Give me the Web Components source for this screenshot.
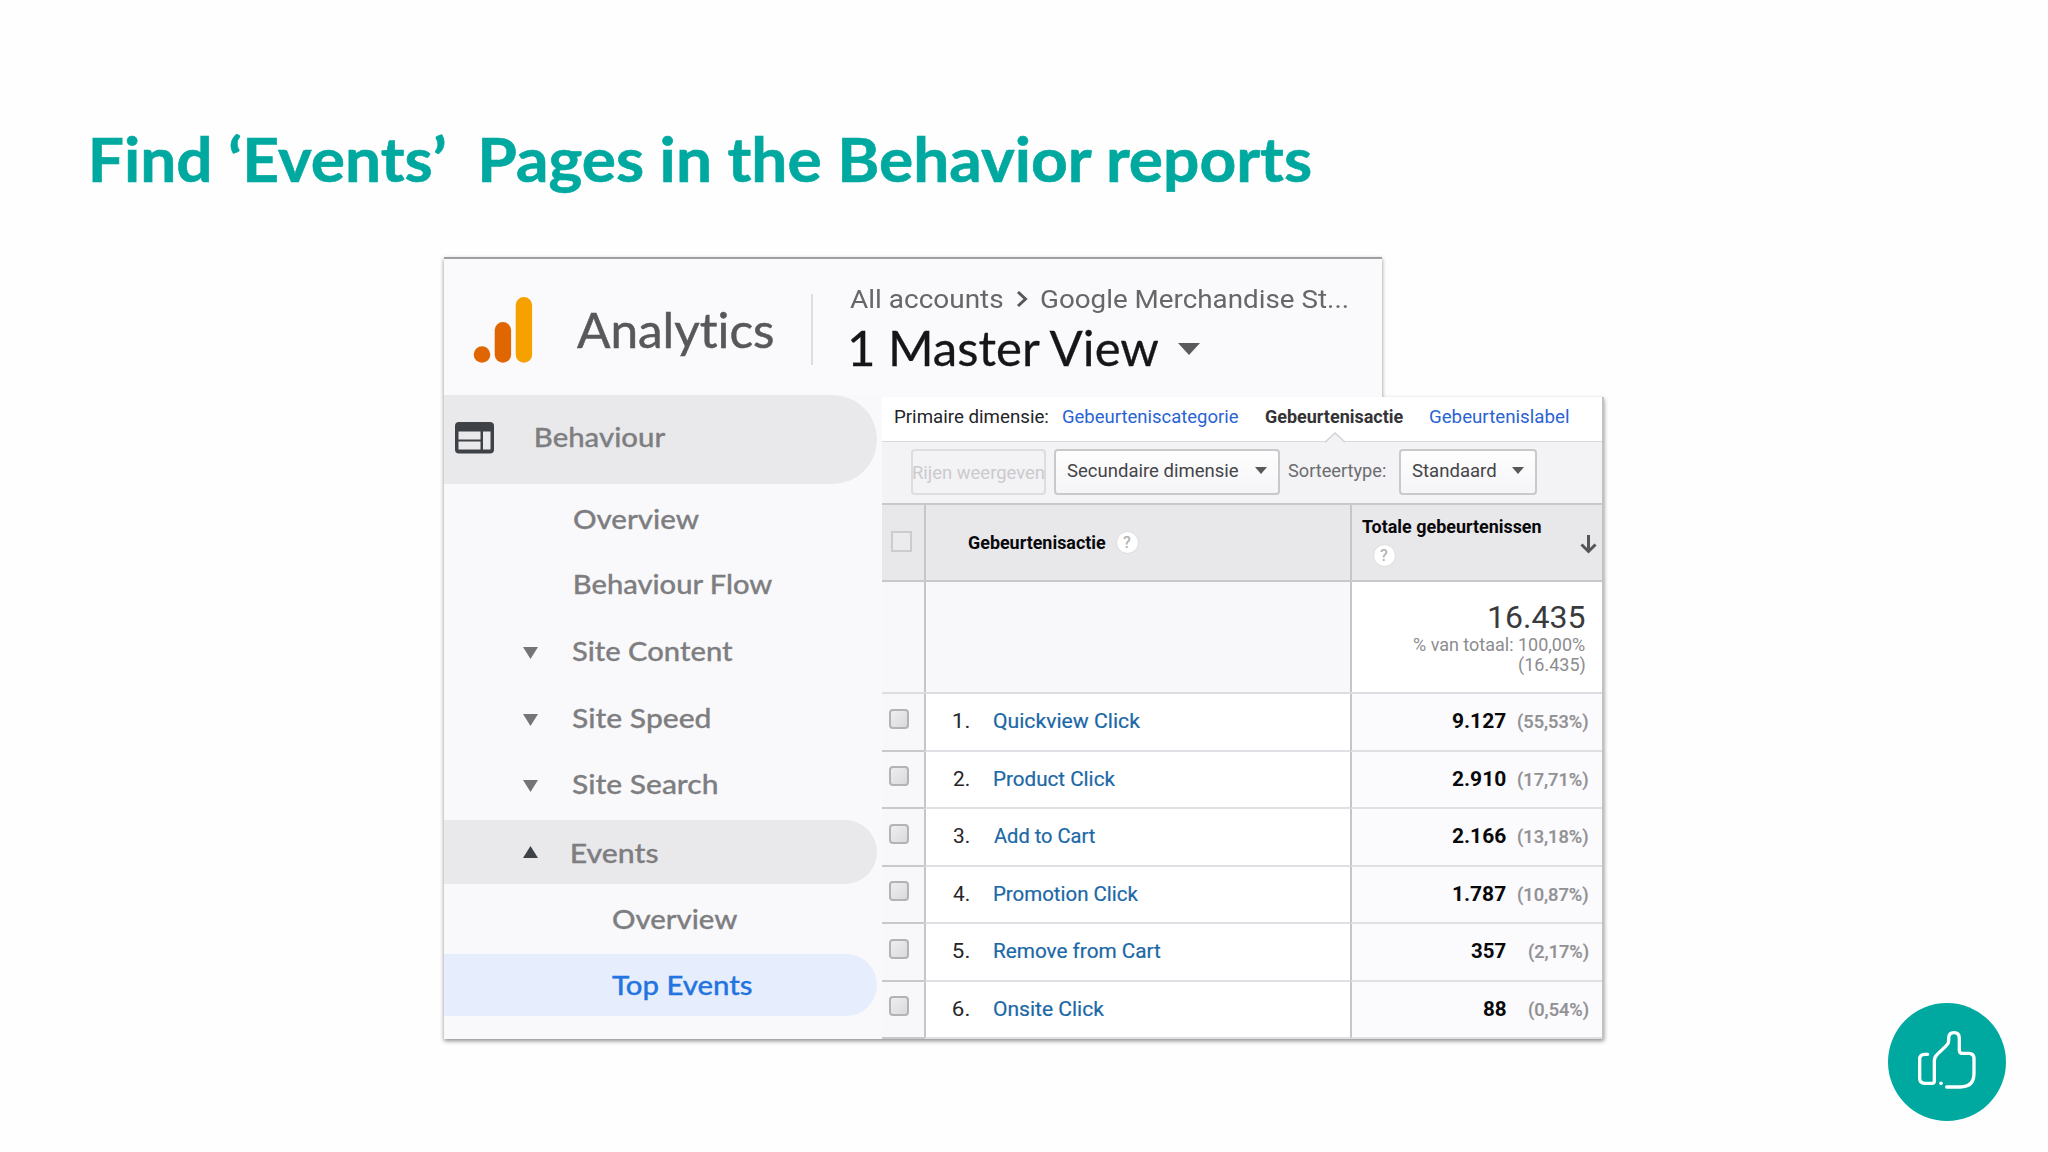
<!DOCTYPE html>
<html lang="en">
<head>
<meta charset="utf-8">
<title>Find Events Pages in the Behavior reports</title>
<style>
  body {
    margin: 0;
    background: #fefefe;
    font-family: Roboto, "Liberation Sans", sans-serif;
    font-variant-ligatures: none;
  }
</style>
</head>
<body>
<slide-page>
  <fit-text slot="title" w="1220">Find ‘Events’  Pages in the Behavior reports</fit-text>
  <analytics-window slot="figure">
    <analytics-header slot="header"></analytics-header>
    <side-nav slot="nav">
      <nav-item class="section" style="--h: 89px" icon="web" w="129.5">Behaviour</nav-item>
      <nav-item style="--h: 71px; --indent: 129.5px" w="125">Overview</nav-item>
      <nav-item style="--h: 60px; --indent: 130.5px" w="198">Behaviour Flow</nav-item>
      <nav-item style="--h: 73px" icon="down" w="161">Site Content</nav-item>
      <nav-item style="--h: 61px" icon="down" w="138.5">Site Speed</nav-item>
      <nav-item style="--h: 71px" icon="down" w="145.5">Site Search</nav-item>
      <nav-item class="open" style="--h: 64px" icon="up" w="86">Events</nav-item>
      <nav-item style="--h: 70px; --indent: 168.5px; --nudge: 0px" w="124.5">Overview</nav-item>
      <nav-item class="active" style="--h: 62px; --indent: 168px; --nudge: 0px" w="140">Top Events</nav-item>
    </side-nav>
    <event-report slot="report">
      <event-row n="1." name="Quickview Click" name-w="146" value="9.127" value-w="54" share="(55,53%)" share-w="70.5"></event-row>
      <event-row n="2." name="Product Click" name-w="121" value="2.910" value-w="54" share="(17,71%)" share-w="70.5"></event-row>
      <event-row n="3." name="Add to Cart" name-w="101" value="2.166" value-w="54" share="(13,18%)" share-w="70.5"></event-row>
      <event-row n="4." name="Promotion Click" name-w="144" value="1.787" value-w="53" share="(10,87%)" share-w="70.5"></event-row>
      <event-row n="5." name="Remove from Cart" name-w="166.5" value="357" value-w="35" share="(2,17%)" share-w="60"></event-row>
      <event-row n="6." name="Onsite Click" name-w="110" value="88" value-w="23.5" share="(0,54%)" share-w="60"></event-row>
    </event-report>
  </analytics-window>
  <like-button slot="action"></like-button>
</slide-page>

<script>
const canvasContext = document.createElement('canvas').getContext('2d')

class BaseElement extends HTMLElement {
  connectedCallback() {
    if (this.shadowRoot) return
    const template = document.createElement('template')
    template.innerHTML = this.template().trim()
    const shadow = this.attachShadow({mode: 'open'})
    shadow.append(template.content.cloneNode(true))
  }
}

// One line of text, stretched so that its ink is exactly `w` pixels wide
class FitText extends BaseElement {
  template() {
    return `
      <style>
        :host {
          display: block;
          flex: none;
        }
        span {
          display: block;
          width: max-content;
          white-space: pre;
          transform-origin: 0 50%;
        }
      </style>
      <span><slot></slot></span>
    `
  }

  connectedCallback() {
    super.connectedCallback()
    const width = Number(this.getAttribute('w'))
    const style = getComputedStyle(this)
    canvasContext.font = `${style.fontWeight} ${style.fontSize} ${style.fontFamily}`
    const metrics = canvasContext.measureText(this.textContent)
    const ink = metrics.actualBoundingBoxLeft + metrics.actualBoundingBoxRight
    const scale = width / ink
    this.style.width = `${width}px`
    this.shadowRoot.querySelector('span').style.transform =
      `translateX(${metrics.actualBoundingBoxLeft * scale}px) scaleX(${scale})`
  }
}

class SlidePage extends BaseElement {
  template() {
    return `
      <style>
        :host {
          display: flex;
          flex-direction: column;
          width: 2048px;
          height: 1152px;
          overflow: hidden;
        }
        h1 {
          box-sizing: border-box;
          height: 257px;
          margin: 0;
          padding: 121px 0 0 92px;
          font: 700 60.5px/76px Lato, "Open Sans", sans-serif;
          font-variant-ligatures: none;
          -webkit-text-stroke: .6px #00a9a0;
          color: #00a9a0;
        }
        main {
          display: flex;
          justify-content: space-between;
          align-items: flex-end;
          height: 782px;
          padding: 0 42.5px 0 444px;
        }
      </style>
      <h1><slot name="title"></slot></h1>
      <main>
        <slot name="figure"></slot>
        <slot name="action"></slot>
      </main>
    `
  }
}

class AnalyticsWindow extends BaseElement {
  template() {
    return `
      <style>
        :host {
          display: grid;
          grid-template-columns: 438px 722px;
          grid-template-rows: 138px 644px;
          filter: drop-shadow(0 2px 2px rgba(0, 0, 0, .45));
        }
        .header {
          grid-column: 1 / 3;
        }
      </style>
      <div class="header"><slot name="header"></slot></div>
      <slot name="nav"></slot>
      <slot name="report"></slot>
    `
  }
}

class AnalyticsHeader extends BaseElement {
  template() {
    return `
      <style>
        :host {
          display: flex;
          box-sizing: border-box;
          width: 938px;
          height: 140px;
          border-top: 2px solid #9f9ea3;
          background: #faf9fc;
        }
        .logo {
          flex: none;
          margin: 38px 0 0 29px;
        }
        .brand {
          margin: 42px 0 0 43.5px;
          font: 400 48px/58px Lato, sans-serif;
          font-variant-ligatures: none;
          -webkit-text-stroke: .5px #58585b;
          color: #58585b;
        }
        .rule {
          width: 2px;
          height: 71px;
          margin: 35px 0 0 38px;
          background: #dddce0;
        }
        .account {
          margin-left: 36.5px;
        }
        .path, .view {
          display: flex;
          align-items: center;
        }
        .path {
          margin-top: 24px;
          font-size: 26.5px;
          line-height: 32px;
          color: #67676a;
        }
        .path svg {
          margin: 0 13px 0 13px;
        }
        .view {
          margin-top: 4px;
          font: 400 48px/58px Lato, sans-serif;
          -webkit-text-stroke: .3px #161619;
          color: #161619;
        }
        .view svg {
          margin: 2px 0 0 17px;
        }
      </style>
      <svg class="logo" width="60" height="68" viewBox="0 0 60 68">
        <circle cx="9" cy="57.5" r="8.3" fill="#e06602"/>
        <rect x="21.7" y="25" width="16.4" height="40.7" rx="8.2" fill="#e06602"/>
        <rect x="42.7" y="0" width="16.4" height="65.7" rx="8.2" fill="#f7a100"/>
      </svg>
      <fit-text class="brand" w="196.5">Analytics</fit-text>
      <div class="rule"></div>
      <div class="account">
        <div class="path">
          <fit-text w="153">All accounts</fit-text>
          <svg width="12" height="18" viewBox="0 0 12 18"><path d="M2 2l7.5 7L2 16" fill="none" stroke="#58585b" stroke-width="3"/></svg>
          <fit-text w="306">Google Merchandise St...</fit-text>
        </div>
        <div class="view">
          <fit-text w="311">1 Master View</fit-text>
          <svg width="22" height="12" viewBox="0 0 22 12"><path d="M0 0h22L11 12z" fill="#5a5a5d"/></svg>
        </div>
      </div>
    `
  }
}

class SideNav extends BaseElement {
  template() {
    return `
      <style>
        :host {
          display: block;
          height: 644px;
          background: #f9f9fc;
        }
      </style>
      <slot></slot>
    `
  }
}

const navIcons = {
  web: `<svg class="web" width="39" height="32" viewBox="0 0 39 32">
    <rect x="0" y="0" width="39" height="31.5" rx="4" fill="#3e4145"/>
    <path d="M3.5 9.5h22v8h-22zM3.5 19.5h22v8h-22zM28 9.5h7.5v18h-7.5z" fill="#e9e9ec"/>
  </svg>`,
  down: '<svg width="15" height="12" viewBox="0 0 15 12"><path d="M0 0h15L7.5 12z" fill="#757578"/></svg>',
  up: '<svg width="15" height="12" viewBox="0 0 15 12"><path d="M0 12h15L7.5 0z" fill="#3e4145"/></svg>',
}

class NavItem extends BaseElement {
  template() {
    const icon = this.getAttribute('icon')
    return `
      <style>
        :host {
          display: flex;
          align-items: center;
          box-sizing: border-box;
          width: 433px;
          height: var(--h);
          padding-left: var(--indent, 78.5px);
          border-radius: 0 45px 45px 0;
          font: 500 26.5px/32px Lato, sans-serif;
          -webkit-text-stroke: .3px;
          color: #7e7e81;
        }
        :host(.section) {
          --nudge: -5px;
          padding-left: 10.5px;
          background: #e9e9ec;
        }
        :host(.open) {
          --nudge: 1px;
          background: #e9e9ec;
        }
        :host(.active) {
          background: #e6eefd;
          color: #2374e1;
        }
        svg {
          flex: none;
          margin: 2px 34.5px 0 0;
        }
        :host(.open) svg {
          margin-top: 0;
        }
        svg.web {
          margin: -3px 42.5px 0 0;
        }
        fit-text {
          margin-top: var(--nudge, -1.5px);
        }
      </style>
      ${navIcons[icon] ?? ''}
      <fit-text w="${this.getAttribute('w')}">${this.textContent}</fit-text>
    `
  }
}

class HelpDot extends BaseElement {
  template() {
    return `
      <style>
        :host {
          display: block;
          flex: none;
          width: 21px;
          height: 21px;
          border-radius: 50%;
          background: #fff;
          box-shadow: 0 0 2px rgba(0, 0, 0, .12);
          font: 500 16px/21px Roboto, sans-serif;
          text-align: center;
          color: #b4b4b7;
        }
      </style>
      ?
    `
  }
}

class DropButton extends BaseElement {
  template() {
    return `
      <style>
        :host {
          display: flex;
          justify-content: space-between;
          align-items: center;
          box-sizing: border-box;
          height: 46px;
          padding: 0 11px;
          border: 2px solid #c9c8cb;
          border-radius: 4px;
          background: linear-gradient(#fefefe, #f5f4f7);
          color: #454548;
        }
        svg {
          margin-top: -2px;
        }
        fit-text {
          margin-top: -1px;
        }
      </style>
      <fit-text w="${this.getAttribute('w')}">${this.textContent}</fit-text>
      <svg width="12" height="7" viewBox="0 0 12 7"><path d="M0 0h12L6 7z" fill="#58585b"/></svg>
    `
  }
}

class EventReport extends BaseElement {
  template() {
    return `
      <style>
        :host {
          display: block;
          box-sizing: border-box;
          height: 642px;
          margin-top: 2px;
          border-right: 2px solid #c2c1c5;
          background: #fff;
          font-size: 18px;
          line-height: 22px;
        }
        .dimensions {
          position: relative;
          display: flex;
          box-sizing: border-box;
          height: 45px;
          padding: 9px 0 0 13px;
          border-bottom: 1px solid #d9d8dc;
          color: #242427;
        }
        .dimensions .link {
          color: #2a63d3;
        }
        .dimensions .on {
          font-weight: 700;
          color: #333336;
        }
        .notch {
          position: absolute;
          left: 443px;
          top: 35px;
        }
        .toolbar {
          display: flex;
          align-items: center;
          box-sizing: border-box;
          height: 63px;
          padding: 0 0 2px 28.5px;
          border-bottom: 2px solid #c9c8cb;
          background: #f3f2f5;
        }
        .rows {
          box-sizing: border-box;
          width: 135px;
          height: 46px;
          border: 2px solid #dddce0;
          border-radius: 4px;
          line-height: 44px;
          color: #cbcacd;
        }
        .sort {
          color: #6c6c6f;
        }
        .head, .total {
          display: grid;
          grid-template-columns: 41.5px 426px 1fr;
          box-sizing: border-box;
        }
        .head {
          height: 77px;
          border-bottom: 2px solid #c9c8cb;
          background: #e8e7ea;
          font-weight: 700;
          color: #09090b;
        }
        .head > div, .total > div {
          box-sizing: border-box;
          border-left: 2px solid #c6c5c9;
        }
        .head > div:first-child, .total > div:first-child {
          border-left: 0;
        }
        .all {
          box-sizing: border-box;
          width: 21px;
          height: 21px;
          margin: 26px 0 0 9px;
          border: 2px solid #cccbcf;
          background: #ebeaed;
        }
        .action {
          display: flex;
          align-items: center;
          padding-left: 42px;
          gap: 11px;
        }
        .metric {
          display: flex;
          justify-content: space-between;
          align-items: flex-start;
          padding: 11px 5px 0 10px;
        }
        .metric help-dot {
          margin: 7px 0 0 12px;
        }
        .metric svg {
          margin-top: 19px;
        }
        .total {
          height: 112px;
          border-bottom: 2px solid #dddce0;
          background: #f8f7fa;
          line-height: 20px;
          color: #8c8c8f;
        }
        .total .sum {
          display: flex;
          flex-direction: column;
          align-items: flex-end;
          padding: 15px 17.5px 0 0;
          background: #fff;
        }
        .big {
          margin-bottom: -2px;
          font-size: 32px;
          line-height: 40px;
          color: #3a3a3d;
        }
      </style>
      <div class="dimensions">
        <fit-text w="153.5">Primaire dimensie:</fit-text>
        <fit-text class="link" style="margin-left: 14.5px" w="175">Gebeurteniscategorie</fit-text>
        <fit-text class="on" style="margin-left: 26.5px" w="138.5">Gebeurtenisactie</fit-text>
        <fit-text class="link" style="margin-left: 26.5px" w="138">Gebeurtenislabel</fit-text>
        <svg class="notch" width="20" height="11" viewBox="0 0 20 11"><path d="M0 11L10 1l10 10z" fill="#f3f2f5"/><path d="M0 10.3L10 1l10 9.3" fill="none" stroke="#d3d2d6" stroke-width="1.5"/></svg>
      </div>
      <div class="toolbar">
        <div class="rows"><fit-text w="131">Rijen weergeven</fit-text></div>
        <drop-button style="width: 226px; margin-left: 8px" w="171">Secundaire dimensie</drop-button>
        <fit-text class="sort" style="margin: -1px 0 0 8.5px" w="98">Sorteertype:</fit-text>
        <drop-button style="width: 138px; margin-left: 12.5px" w="83.5">Standaard</drop-button>
      </div>
      <div class="head">
        <div><div class="all"></div></div>
        <div class="action">
          <fit-text w="138">Gebeurtenisactie</fit-text>
          <help-dot></help-dot>
        </div>
        <div class="metric">
          <div>
            <fit-text w="179.5">Totale gebeurtenissen</fit-text>
            <help-dot></help-dot>
          </div>
          <svg width="17" height="19" viewBox="0 0 17 19"><path d="M8.5 0v16M1.5 9.5l7 7 7-7" fill="none" stroke="#555558" stroke-width="3"/></svg>
        </div>
      </div>
      <div class="total">
        <div></div>
        <div></div>
        <div class="sum">
          <fit-text class="big" w="95.5">16.435</fit-text>
          <fit-text w="172">% van totaal: 100,00%</fit-text>
          <fit-text w="65.5">(16.435)</fit-text>
        </div>
      </div>
      <slot></slot>
    `
  }
}

class EventRow extends BaseElement {
  template() {
    const attr = (name) => this.getAttribute(name)
    return `
      <style>
        :host {
          display: grid;
          grid-template-columns: 41.5px 426px 1fr;
          height: 57.5px;
          font-size: 19.5px;
          line-height: 24px;
        }
        div {
          display: flex;
          box-sizing: border-box;
          border-bottom: 2px solid #e0dfe3;
          border-left: 2px solid #c6c5c9;
        }
        .check {
          border-left: 0;
          border-bottom-color: #c9c8cc;
          background: #f8f7fa;
        }
        .box {
          box-sizing: border-box;
          width: 20px;
          height: 20px;
          margin: 14.5px 0 0 7px;
          border: 2px solid #b3b2b5;
          border-radius: 4px;
          background: linear-gradient(135deg, #eeedf0, #dad9dc);
        }
        .name, .value {
          padding-top: 16px;
        }
        .name {
          padding-left: 27.5px;
          gap: 25px;
          color: #262629;
        }
        .link {
          -webkit-text-stroke: .2px;
          color: #1b68a6;
        }
        .value {
          justify-content: flex-end;
          padding-right: 13.5px;
          background: #fbfafd;
          font-weight: 700;
          color: #09090b;
        }
        .share {
          width: 82.5px;
          display: flex;
          justify-content: flex-end;
          font-size: 17.5px;
          font-weight: 500;
          -webkit-text-stroke: .2px;
          color: #919194;
        }
      </style>
      <div class="check"><span class="box"></span></div>
      <div class="name">
        <fit-text w="16">${attr('n')}</fit-text>
        <fit-text class="link" w="${attr('name-w')}">${attr('name')}</fit-text>
      </div>
      <div class="value">
        <fit-text w="${attr('value-w')}">${attr('value')}</fit-text>
        <span class="share"><fit-text w="${attr('share-w')}">${attr('share')}</fit-text></span>
      </div>
    `
  }
}

class LikeButton extends BaseElement {
  template() {
    return `
      <style>
        :host {
          display: block;
          width: 118px;
          height: 118px;
          margin-bottom: -82px;
        }
        svg {
          display: block;
        }
      </style>
      <svg width="118" height="118" viewBox="54 39 354 354">
        <circle cx="231" cy="216" r="177" fill="#00a9a0"/>
        <path d="M173 193h-9q-15 0-15 15v57q0 15 15 15h22q7 0 7-7v-61q0-11 8-18l28-27q7-7 7-15v-7q0-17 16-17t16 17v36q0 9 8 9h20q16 0 16 16v44q0 41-41 41h-41" fill="none" stroke="#fff" stroke-width="10" stroke-linecap="round" stroke-linejoin="round"/>
        <circle cx="213" cy="280" r="5.5" fill="#fff"/>
      </svg>
    `
  }
}

// Containers come first, so that each text is measured in its inherited font
customElements.define('slide-page', SlidePage)
customElements.define('analytics-window', AnalyticsWindow)
customElements.define('analytics-header', AnalyticsHeader)
customElements.define('side-nav', SideNav)
customElements.define('nav-item', NavItem)
customElements.define('event-report', EventReport)
customElements.define('event-row', EventRow)
customElements.define('drop-button', DropButton)
customElements.define('help-dot', HelpDot)
customElements.define('like-button', LikeButton)
customElements.define('fit-text', FitText)
</script>
</body>
</html>
